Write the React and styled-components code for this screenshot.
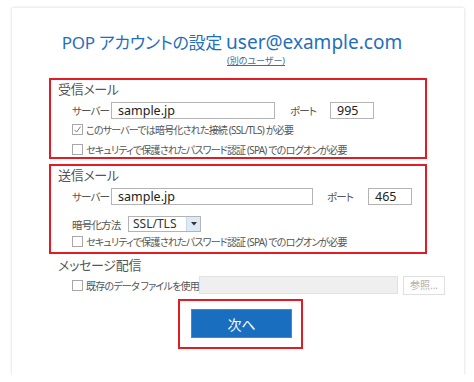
import React from 'react';
import styled, { createGlobalStyle } from 'styled-components';

const GlobalStyle = createGlobalStyle`
  html, body {
    margin: 0;
    padding: 0;
    background: #ffffff;
  }
  body {
    font-family: "Noto Sans", "Noto Sans CJK JP", sans-serif;
    font-feature-settings: "palt";
    color: #444;
  }
`;

const Card = styled.div`
  box-sizing: border-box;
  width: 452px;
  height: 367px;
  margin: 8px 0 0 12px;
  background: #fff;
  box-shadow: 0 0 3px rgba(0, 0, 0, 0.18);
  padding-top: 17px;
`;

const Title = styled.h1`
  margin: 0;
  text-align: center;
  font-weight: 400;
  color: #1f6fbd;
  line-height: 24px;
  padding-right: 12px;
`;

const TitleJa = styled.span`
  font-size: 17px;
  letter-spacing: -0.3px;
`;

const TitleMail = styled.span`
  font-size: 19px;
`;

const OtherUser = styled.a`
  display: block;
  width: fit-content;
  margin: 0 0 0 215px;
  font-size: 9px;
  line-height: 12px;
  color: #4a6a90;
  text-decoration: underline;
`;

const Section = styled.section`
  box-sizing: border-box;
  width: 378px;
  height: ${(p) => p.$h}px;
  margin: ${(p) => p.$top}px 0 0 37px;
  border: 2px solid #e31b23;
  padding: 1px 0 0 7px;
`;

const Plain = styled.section`
  margin: 3px 0 0 46px;
`;

const Heading = styled.div`
  font-size: 13px;
  line-height: 16px;
  color: #555;
  letter-spacing: -0.3px;
`;

const Row = styled.div`
  display: flex;
  align-items: center;
  height: ${(p) => p.$h || 20}px;
  margin-top: ${(p) => p.$mt || 0}px;
  padding-left: 14px;
`;

const Label = styled.span`
  font-size: 10.5px;
  letter-spacing: -0.8px;
  color: #555;
  width: ${(p) => p.$w}px;
  white-space: nowrap;
  flex: none;
`;

const TextBox = styled.div`
  box-sizing: border-box;
  width: ${(p) => p.$w}px;
  height: 17px;
  border: 1px solid #b4b4b4;
  background: #fff;
  font-size: 12.5px;
  line-height: 15px;
  color: #222;
  padding-left: ${(p) => p.$pl || 6}px;
  flex: none;
`;

const PortLabel = styled.span`
  font-size: 10.5px;
  letter-spacing: -0.8px;
  color: #555;
  margin-left: ${(p) => p.$ml}px;
  width: ${(p) => p.$w}px;
  white-space: nowrap;
  flex: none;
`;

const Select = styled.div`
  box-sizing: border-box;
  display: flex;
  width: 73px;
  height: 16px;
  border: 1px solid #b4b4b4;
  font-size: 12px;
  color: #333;
  line-height: 14px;
`;

const SelectValue = styled.span`
  flex: 1;
  padding-left: 4px;
`;

const SelectArrow = styled.span`
  width: 13px;
  background: #dce9f6;
  border-left: 1px solid #c6d8ea;
  display: flex;
  align-items: center;
  justify-content: center;
`;

const Check = styled.span`
  box-sizing: border-box;
  width: 11px;
  height: 11px;
  border: 1px solid #a8a8a8;
  background: #fff;
  flex: none;
  margin-right: 3px;
  display: flex;
  align-items: center;
  justify-content: center;
`;

const CheckText = styled.span`
  font-size: 10px;
  letter-spacing: -0.8px;
  color: #555;
  white-space: nowrap;
  width: ${(p) => (p.$w ? `${p.$w}px` : 'auto')};
  flex: none;
`;

const Disabled = styled.div`
  box-sizing: border-box;
  width: 199px;
  height: 18px;
  background: #efefef;
  border: 1px solid #e2e2e2;
`;

const Browse = styled.div`
  box-sizing: border-box;
  width: 42px;
  height: 19px;
  margin-left: 5px;
  border: 1px solid #e0e0e0;
  background: #fff;
  color: #b0b0b0;
  font-size: 10px;
  line-height: 17px;
  text-align: center;
`;

const ButtonFrame = styled.div`
  box-sizing: border-box;
  width: 125px;
  height: 50px;
  margin: 4px 0 0 166px;
  border: 2px solid #e31b23;
  padding: 8px 0 0 11px;
`;

const NextButton = styled.button`
  box-sizing: border-box;
  width: 101px;
  height: 29px;
  background: #1a6ebf;
  border: 1px solid #3e8bd2;
  color: #fff;
  font-family: inherit;
  font-size: 14px;
  padding: 0;
`;

const Checkbox = ({ checked, width, children }) => (
  <>
    <Check>
      {checked && (
        <svg width="9" height="9" viewBox="0 0 9 9">
          <path d="M1.5 4.8 L3.6 7 L7.6 1.6" fill="none" stroke="#777" strokeWidth="1" />
        </svg>
      )}
    </Check>
    <CheckText $w={width}>{children}</CheckText>
  </>
);

export default function App() {
  return (
    <>
      <GlobalStyle />
      <Card>
        <Title>
          <TitleJa>POP アカウントの設定 </TitleJa>
          <TitleMail>user@example.com</TitleMail>
        </Title>
        <OtherUser>(別のユーザー)</OtherUser>

        <Section $top={11} $h={81}>
          <Heading>受信メール</Heading>
          <Row $h={17} $mt={5}>
            <Label $w={39}>サーバー</Label>
            <TextBox $w={164}>sample.jp</TextBox>
            <PortLabel $ml={15} $w={40}>ポート</PortLabel>
            <TextBox $w={44}>995</TextBox>
          </Row>
          <Row>
            <Checkbox checked>このサーバーでは暗号化された接続 (SSL/TLS) が必要</Checkbox>
          </Row>
          <Row>
            <Checkbox>セキュリティで保護されたパスワード認証 (SPA) でのログオンが必要</Checkbox>
          </Row>
        </Section>

        <Section $top={5} $h={90}>
          <Heading>送信メール</Heading>
          <Row $h={17} $mt={5}>
            <Label $w={39}>サーバー</Label>
            <TextBox $w={202}>sample.jp</TextBox>
            <PortLabel $ml={14} $w={41}>ポート</PortLabel>
            <TextBox $w={44}>465</TextBox>
          </Row>
          <Row $h={16} $mt={11}>
            <Label $w={56}>暗号化方法</Label>
            <Select>
              <SelectValue>SSL/TLS</SelectValue>
              <SelectArrow>
                <svg width="6" height="4" viewBox="0 0 6 4">
                  <path d="M0 0 H6 L3 3.5 Z" fill="#333" />
                </svg>
              </SelectArrow>
            </Select>
          </Row>
          <Row $h={19}>
            <Checkbox>セキュリティで保護されたパスワード認証 (SPA) でのログオンが必要</Checkbox>
          </Row>
        </Section>

        <Plain>
          <Heading>メッセージ配信</Heading>
          <Row $h={20} $mt={2}>
            <Checkbox width={113}>既存のデータ ファイルを使用</Checkbox>
            <Disabled />
            <Browse>参照...</Browse>
          </Row>
        </Plain>

        <ButtonFrame>
          <NextButton>次へ</NextButton>
        </ButtonFrame>
      </Card>
    </>
  );
}
